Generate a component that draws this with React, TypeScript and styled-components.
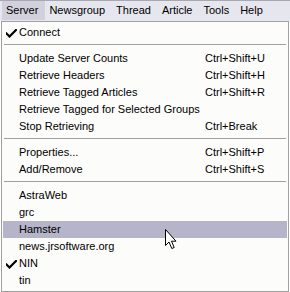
import React from "react";
import styled, { createGlobalStyle } from "styled-components";

const Global = createGlobalStyle`
  html, body { margin: 0; padding: 0; background: #ffffff; }
  body { font-family: "Liberation Sans", Arial, sans-serif; font-size: 11px; color: #000; }
`;

const Page = styled.div`
  position: relative;
  width: 290px;
  height: 292px;
  overflow: hidden;
  background: #ffffff;
`;

const MenuBar = styled.div`
  display: flex;
  align-items: stretch;
  height: 20px;
  border-top: 1px solid #a8a8b0;
  background: #e6e6ee;
  padding-left: 2px;
`;

const MenuTitle = styled.div<{ $active?: boolean }>`
  display: flex;
  align-items: center;
  padding: 0 7px 0 4px;
  height: 19px;
  background: ${(p) => (p.$active ? "#d2d0dc" : "transparent")};
  font-size: 11px;
  line-height: 19px;
  white-space: nowrap;
`;

const Popup = styled.div`
  margin-left: 1px;
  width: 284px;
  border: 1px solid #a0a0a0;
  background: #fcfcfa;
  padding: 2px 1px;
`;

const Item = styled.div<{ $hover?: boolean }>`
  display: flex;
  align-items: center;
  height: 17px;
  background: ${(p) => (p.$hover ? "#b6b4c9" : "transparent")};
  white-space: nowrap;
  font-size: 11px;
  line-height: 17px;
`;

const CheckCell = styled.div`
  flex: none;
  width: 16px;
  height: 17px;
  display: flex;
  align-items: center;
  padding-left: 3px;
  box-sizing: border-box;
`;

const Label = styled.span`
  flex: 1;
  min-width: 0;
`;

const Shortcut = styled.span`
  flex: none;
  width: 82px;
`;

const Separator = styled.div`
  height: 1px;
  margin: 3px 1px 5px 1px;
  background: #a0a0a0;
`;

const Cursor = styled.svg`
  position: absolute;
  left: 164px;
  top: 228px;
`;

const Check = () => (
  <svg width="11" height="9" viewBox="0 0 11 9" style={{ marginTop: 1 }}>
    <path d="M0.5 4.5 L3.5 7.5 L10 1" stroke="#000" strokeWidth="2.2" fill="none" strokeLinecap="square" />
  </svg>
);

type Row =
  | { kind: "item"; label: string; shortcut?: string; checked?: boolean; hover?: boolean }
  | { kind: "sep" };

const rows: Row[] = [
  { kind: "item", label: "Connect", checked: true },
  { kind: "sep" },
  { kind: "item", label: "Update Server Counts", shortcut: "Ctrl+Shift+U" },
  { kind: "item", label: "Retrieve Headers", shortcut: "Ctrl+Shift+H" },
  { kind: "item", label: "Retrieve Tagged Articles", shortcut: "Ctrl+Shift+R" },
  { kind: "item", label: "Retrieve Tagged for Selected Groups" },
  { kind: "item", label: "Stop Retrieving", shortcut: "Ctrl+Break" },
  { kind: "sep" },
  { kind: "item", label: "Properties...", shortcut: "Ctrl+Shift+P" },
  { kind: "item", label: "Add/Remove", shortcut: "Ctrl+Shift+S" },
  { kind: "sep" },
  { kind: "item", label: "AstraWeb" },
  { kind: "item", label: "grc" },
  { kind: "item", label: "Hamster", hover: true },
  { kind: "item", label: "news.jrsoftware.org" },
  { kind: "item", label: "NIN", checked: true },
  { kind: "item", label: "tin" },
];

const menus = ["Server", "Newsgroup", "Thread", "Article", "Tools", "Help"];

export default function App() {
  return (
    <Page>
      <Global />
      <MenuBar>
        {menus.map((m, i) => (
          <MenuTitle key={m} $active={i === 0}>
            {m}
          </MenuTitle>
        ))}
      </MenuBar>
      <Popup>
        {rows.map((r, i) =>
          r.kind === "sep" ? (
            <Separator key={i} />
          ) : (
            <Item key={i} $hover={r.hover}>
              <CheckCell>{r.checked ? <Check /> : null}</CheckCell>
              <Label>{r.label}</Label>
              <Shortcut>{r.shortcut ?? ""}</Shortcut>
            </Item>
          )
        )}
      </Popup>
      <Cursor width="13" height="22" viewBox="0 0 13 22">
        <path
          d="M1.5 1.5 L1.5 17.5 L5 14 L7.8 20.5 L10.2 19.5 L7.5 13.2 L12 13.2 Z"
          fill="#fff"
          stroke="#000"
          strokeWidth="1"
          strokeLinejoin="miter"
        />
      </Cursor>
    </Page>
  );
}
